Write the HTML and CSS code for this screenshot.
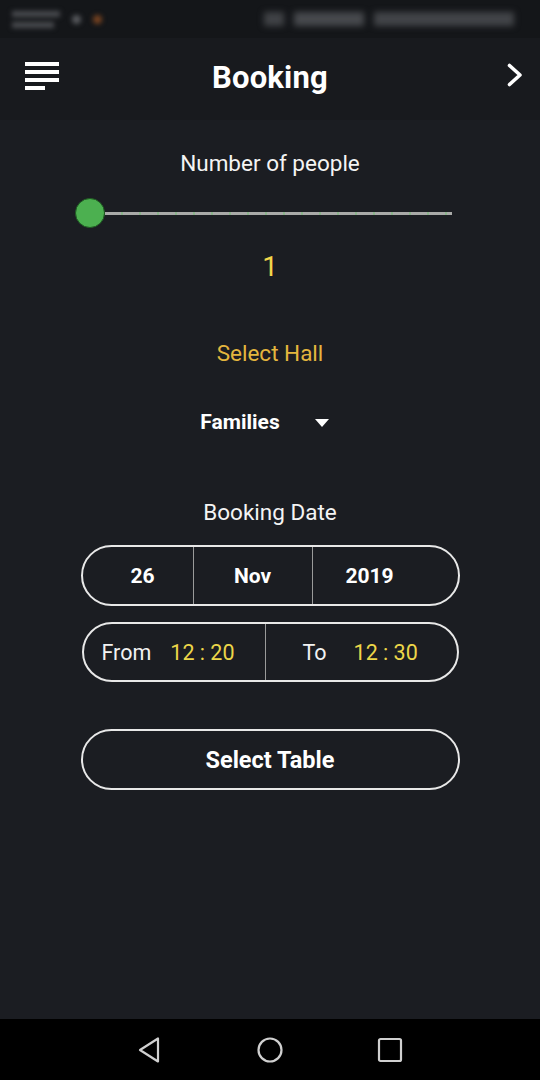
FILE: index.html
```html
<!DOCTYPE html>
<html>
<head>
<meta charset="utf-8">
<link rel="stylesheet" href="styles.css">
</head>
<body>
<div class="screen">
  <div class="statusbar">
    <div class="sb-left">
      <div class="sb-carrier"><span></span><span class="short"></span></div>
      <div class="sb-dot"></div>
      <div class="sb-dot orange"></div>
    </div>
    <div class="sb-right"></div>
  </div>
  <div class="appbar">
    <svg class="menu" width="34" height="30" viewBox="0 0 34 30">
      <rect x="0" y="1" width="34" height="4" fill="#fff"/>
      <rect x="0" y="9" width="34" height="4" fill="#fff"/>
      <rect x="0" y="17" width="34" height="4" fill="#fff"/>
      <rect x="0" y="25" width="20" height="4" fill="#fff"/>
    </svg>
    <div class="title">Booking</div>
    <svg class="chev" width="18" height="26" viewBox="0 0 18 26">
      <path d="M3.5 3.5 L14 13 L3.5 22.5" fill="none" stroke="#fff" stroke-width="3.6" stroke-linecap="round" stroke-linejoin="round"/>
    </svg>
  </div>
  <div class="main">
    <div class="label first">Number of people</div>
    <div class="slider">
      <div class="thumb"></div>
      <div class="track"></div>
    </div>
    <div class="count">1</div>
    <div class="hall">Select Hall</div>
    <div class="dropdown">
      <span>Families</span>
      <svg width="14" height="8" viewBox="0 0 14 8"><path d="M0 0 L14 0 L7 8 Z" fill="#fff"/></svg>
    </div>
    <div class="label date-label">Booking Date</div>
    <div class="pill date">
      <div class="seg d1">26</div>
      <div class="seg d2">Nov</div>
      <div class="seg d3">2019</div>
    </div>
    <div class="pill time">
      <div class="half t1"><span class="tl">From</span><span class="tv">12 : 20</span></div>
      <div class="half t2"><span class="tl">To</span><span class="tv">12 : 30</span></div>
    </div>
    <div class="pill button">Select Table</div>
  </div>
  <div class="navbar">
    <svg width="26" height="28" viewBox="0 0 26 28"><path d="M21 2.5 L21 25.5 L3 14 Z" fill="none" stroke="#d0d0d0" stroke-width="2.2" stroke-linejoin="round"/></svg>
    <svg width="28" height="28" viewBox="0 0 28 28"><circle cx="14" cy="14" r="11.5" fill="none" stroke="#d0d0d0" stroke-width="2.2"/></svg>
    <svg width="26" height="26" viewBox="0 0 26 26"><rect x="2" y="2" width="22" height="22" rx="1.5" fill="none" stroke="#d0d0d0" stroke-width="2.2"/></svg>
  </div>
</div>
</body>
</html>
```
FILE: styles.css
```css
html, body {
  margin: 0;
  padding: 0;
  background: #1b1d22;
}
.screen {
  width: 540px;
  height: 1080px;
  display: flex;
  flex-direction: column;
  font-family: Roboto, "Noto Sans", sans-serif;
  color: #fff;
  overflow: hidden;
}
.statusbar {
  height: 38px;
  flex: none;
  background: #141619;
  display: flex;
  justify-content: space-between;
  align-items: center;
  padding: 0 26px 0 12px;
}
.sb-left {
  display: flex;
  align-items: center;
  gap: 12px;
  filter: blur(2.5px);
}
.sb-carrier {
  display: flex;
  flex-direction: column;
  gap: 5px;
}
.sb-carrier span {
  display: block;
  width: 48px;
  height: 6px;
  background: #4a4c50;
}
.sb-carrier span.short { width: 42px; }
.sb-dot {
  width: 9px;
  height: 9px;
  border-radius: 50%;
  background: #5a5c60;
}
.sb-dot.orange { background: #7a4420; }
.sb-right {
  width: 250px;
  height: 14px;
  background: linear-gradient(90deg, #404246 0 8%, transparent 8% 12%, #47494d 12% 40%, transparent 40% 44%, #424448 44% 100%);
  filter: blur(3px);
}
.appbar {
  height: 82px;
  flex: none;
  background: #181a1e;
  display: grid;
  grid-template-columns: 1fr auto 1fr;
  align-items: center;
  padding: 0 16px 4px 16px;
  box-sizing: border-box;
}
.menu { margin-top: -2px; margin-left: 9px; justify-self: start; }
.title {
  font-size: 31px;
  font-weight: 700;
  letter-spacing: 0.2px;
}
.chev { margin-top: -4px; justify-self: end; }
.main {
  flex: 1;
  display: flex;
  flex-direction: column;
  align-items: center;
}
.label {
  font-size: 22.5px;
  line-height: 26px;
  color: #f4f4f4;
}
.label.first { margin-top: 30px; }
.slider {
  align-self: flex-start;
  margin-left: 75px;
  margin-top: 22px;
  width: 377px;
  height: 30px;
  display: flex;
  align-items: center;
}
.thumb {
  width: 28px;
  height: 28px;
  border-radius: 50%;
  background: #4cb050;
  border: 1px solid #1f5a22;
  flex: none;
}
.track {
  flex: 1;
  height: 3px;
  background:
    repeating-linear-gradient(90deg, transparent 0 16px, #8db58d 16px 18px),
    #a9aaa8;
}
.count {
  margin-top: 23px;
  font-size: 28px;
  line-height: 32px;
  color: #f2d64a;
}
.hall {
  margin-top: 57px;
  font-size: 22.5px;
  line-height: 26px;
  color: #e4b63e;
}
.dropdown {
  margin-top: 43px;
  display: flex;
  align-items: center;
  gap: 35px;
  font-size: 21px;
  line-height: 26px;
  font-weight: 700;
  margin-right: 11px;
}
.dropdown svg { margin-top: 2px; }
.date-label { margin-top: 64px; }
.pill {
  box-sizing: border-box;
  width: 379px;
  border: 2px solid #e8e8e8;
  border-radius: 31px;
  display: flex;
}
.date {
  margin-top: 20px;
  height: 61px;
}
.seg {
  display: flex;
  align-items: center;
  justify-content: center;
  font-size: 21px;
  font-weight: 700;
  box-sizing: border-box;
}
.d1 { width: 111px; padding-left: 10px; border-right: 1px solid #9a9a9a; }
.d2 { width: 119px; border-right: 1px solid #9a9a9a; }
.d3 { flex: 1; padding-right: 31px; }
.time {
  margin-top: 16px;
  width: 377px;
  height: 60px;
}
.half {
  display: flex;
  align-items: center;
  font-size: 21.5px;
  box-sizing: border-box;
}
.t1 { width: 182px; padding-left: 18px; gap: 19px; border-right: 1px solid #9a9a9a; }
.t2 { flex: 1; padding-left: 37px; gap: 27px; }
.tl { color: #f2f2f2; }
.tv { color: #ecd649; }
.button {
  margin-top: 47px;
  height: 61px;
  align-items: center;
  justify-content: center;
  font-size: 23.5px;
  font-weight: 700;
}
.navbar {
  height: 61px;
  flex: none;
  background: #000;
  display: flex;
  align-items: center;
  justify-content: center;
  gap: 93px;
}
```
